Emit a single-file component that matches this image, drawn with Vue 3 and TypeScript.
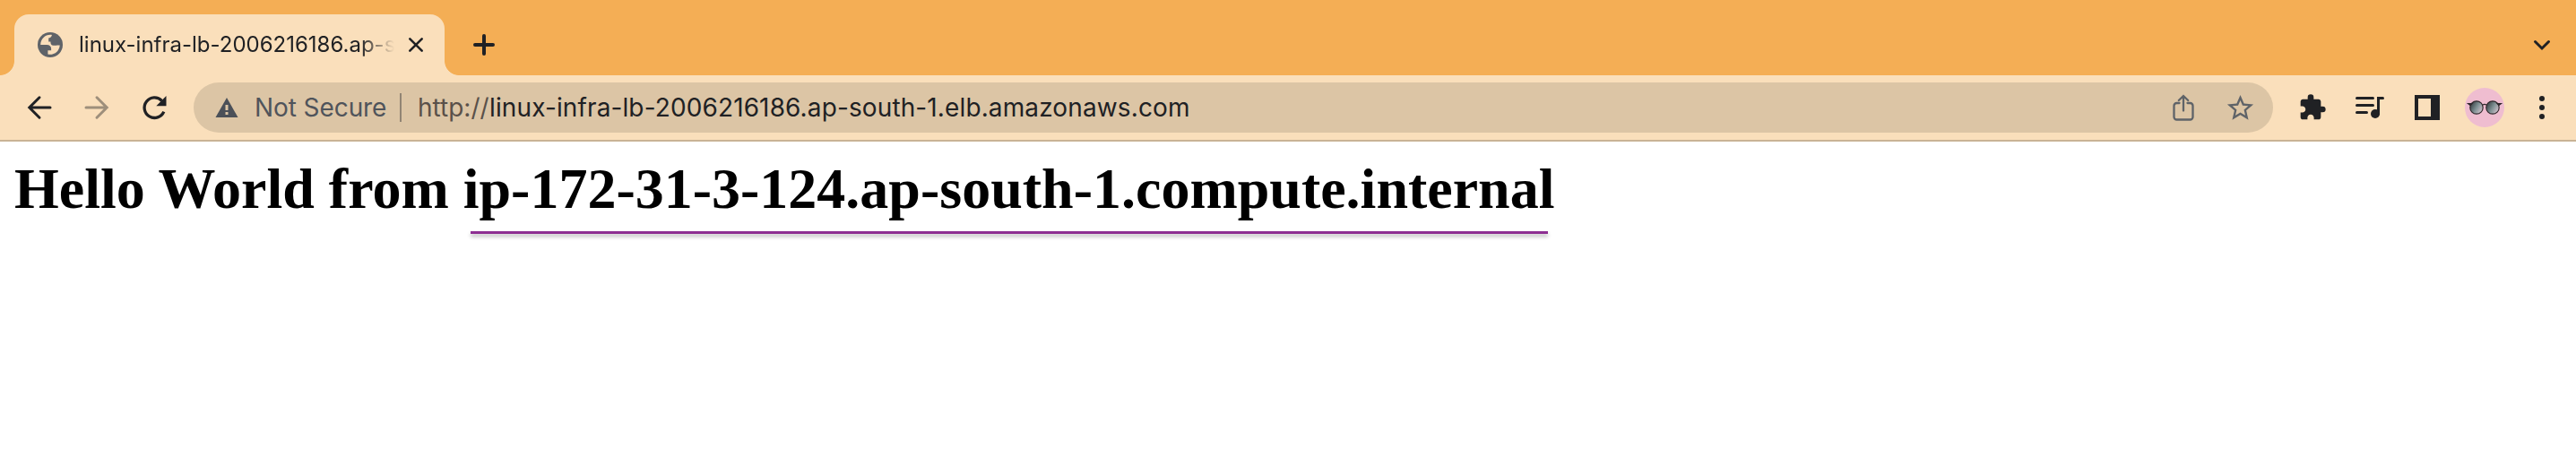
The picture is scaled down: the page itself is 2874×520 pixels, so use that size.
<script setup lang="ts">
const host: string = 'linux-infra-lb-2006216186.ap-south-1.elb.amazonaws.com'
const greeting: string = 'Hello World from'
const server: string = 'ip-172-31-3-124.ap-south-1.compute.internal'
</script>

<template>
  <div class="window">
    <header class="tabstrip">
      <div class="tab">
        <svg class="globe" viewBox="0 0 28 28">
          <circle cx="14" cy="14" r="14" fill="#5f6368" />
          <path d="M16 3C9 2 3.500 7 3.200 14h7.100c2.900 0 4.800 1.600 4.800 4.300v2h-3.700v4.300c7 1.300 12.900-3.600 13.300-10.200h-2.800c-.8 0-1.100.3-1.100.3h-3.100c-2.700 0-3.300-1.600-3.300-4.200h-2.200V6.500c1.500 0 2.900-.8 3.800-3.500z" fill="#fadfbb" />
        </svg>
        <span class="title">{{ host }}</span>
        <svg class="close" viewBox="0 0 16 16"><path d="M1.300 1.300l13.400 13.400M14.700 1.300L1.300 14.700" /></svg>
      </div>
      <svg class="plus" viewBox="0 0 24 24"><path d="M12 2v20M2 12h20" /></svg>
      <svg class="chevron" viewBox="0 0 18 12"><path d="M1.500 1.500L9 9l7.500-7.500" /></svg>
    </header>

    <div class="toolbar">
      <svg class="arrow back" viewBox="0 0 28 28"><path d="M26 14H3M14 2.800L2.800 14 14 25.200" /></svg>
      <svg class="arrow forward" viewBox="0 0 28 28"><path d="M2 14h23M14 2.800L25.200 14 14 25.200" /></svg>
      <svg class="reload" viewBox="0 0 28 28">
        <path d="M22.500 6.300A11.300 11.300 0 1 0 24.800 18.600" fill="none" stroke="#202124" stroke-width="3.300" />
        <path d="M27.500 1v11.200H16.300z" fill="#202124" />
      </svg>
      <div class="omnibox">
        <svg class="warning" viewBox="0 0 26 22">
          <path d="M13 0l12.500 22H.5z" fill="#4b5058" />
          <path d="M11.500 8h3v6h-3zM11.500 16h3v3h-3z" fill="#dcc5a5" />
        </svg>
        <span class="security">Not Secure</span>
        <i class="divider"></i>
        <span class="scheme">http://</span><span class="host">{{ host }}</span>
        <svg class="share" viewBox="0 0 24 30">
          <path d="M7.500 10H4.500a3 3 0 0 0-3 3v12.500a3 3 0 0 0 3 3h15a3 3 0 0 0 3-3V13a3 3 0 0 0-3-3h-3M12 18.500V2.200M6.800 7L12 2l5.200 5" />
        </svg>
        <svg class="star" viewBox="0 0 24 24">
          <path d="M22 9.240l-7.190-.62L12 2 9.190 8.630 2 9.240l5.460 4.730L5.820 21 12 17.270 18.180 21l-1.630-7.030L22 9.240zM12 15.400l-3.760 2.270 1-4.280-3.320-2.880 4.380-.38L12 6.100l1.710 4.040 4.380.38-3.320 2.880 1 4.280L12 15.400z" />
        </svg>
      </div>
      <svg class="puzzle" viewBox="0 0 24 24">
        <path d="M20.500 11H19V7c0-1.100-.9-2-2-2h-4V3.500a2.500 2.500 0 0 0-5 0V5H4c-1.100 0-1.990.9-1.990 2v3.800H3.500c1.490 0 2.700 1.210 2.700 2.700s-1.210 2.700-2.700 2.700H2V20c0 1.100.9 2 2 2h3.800v-1.500c0-1.490 1.210-2.700 2.700-2.700s2.700 1.210 2.700 2.700V22H17c1.100 0 2-.9 2-2v-4h1.500a2.500 2.500 0 0 0 0-5z" />
      </svg>
      <svg class="music" viewBox="0 0 32 26">
        <path d="M1.500 2.500h18M1.500 10.500h18M1.500 18.500h11M30.500 2.500h-5V20" fill="none" stroke="#202124" stroke-width="3" stroke-linecap="round" />
        <circle cx="22" cy="20" r="5" fill="#202124" />
      </svg>
      <svg class="panel" viewBox="0 0 28 28"><path fill-rule="evenodd" d="M0 0h28v28H0zM4 4v20h14V4z" /></svg>
      <svg class="avatar" viewBox="0 0 44 44">
        <defs>
          <linearGradient id="lens" x1="0" y1="0.200" x2="1" y2="0.800">
            <stop offset="0" stop-color="#343b3e" />
            <stop offset="0.500" stop-color="#7e9093" />
            <stop offset="1" stop-color="#dcc9d4" />
          </linearGradient>
        </defs>
        <circle cx="22" cy="22" r="22" fill="#efbdd0" />
        <g stroke="#30292d" stroke-width="1.200">
          <circle cx="13" cy="22" r="7.200" fill="url(#lens)" />
          <circle cx="31" cy="22" r="7.200" fill="url(#lens)" />
          <path d="M20 19q2-1.300 4 0" fill="none" />
          <path d="M3.500 17.500h4.500l-2 2zM40.500 17.500H36l2 2z" fill="#30292d" />
        </g>
      </svg>
      <svg class="dots" viewBox="0 0 6 26"><circle cx="3" cy="3" r="3" /><circle cx="3" cy="13" r="3" /><circle cx="3" cy="23" r="3" /></svg>
    </div>

    <main class="page">
      <h1>{{ greeting }} <span class="server">{{ server }}</span></h1>
    </main>
  </div>
</template>

<style>
body { margin: 0; background: #fff; }
</style>

<style scoped>
.window { width: 2874px; height: 520px; overflow: hidden; background: #fff; font-family: Inter, "Liberation Sans", sans-serif; color: #202124; }
svg { display: block; flex: none; overflow: visible; }
.tabstrip { display: flex; box-sizing: border-box; height: 84px; padding: 16px 29px 0 16px; background: #f4ae55; }
.tab { position: relative; display: flex; box-sizing: border-box; width: 480px; height: 68px; padding: 20px 24px 0 26px; border-radius: 16px 16px 0 0; background: #fadfbb; }
.tab::before, .tab::after { content: ""; position: absolute; bottom: 0; width: 16px; height: 16px; }
.tab::before { left: -16px; background: radial-gradient(circle at 0 0, transparent 15.500px, #fadfbb 16.300px); }
.tab::after { right: -16px; background: radial-gradient(circle at 100% 0, transparent 15.500px, #fadfbb 16.300px); }
.globe { width: 28px; height: 28px; }
.title { width: 354px; margin-left: 18px; overflow: hidden; white-space: nowrap; font-size: 24px; line-height: 28px; -webkit-mask-image: linear-gradient(90deg, #000 314px, transparent 352px); mask-image: linear-gradient(90deg, #000 314px, transparent 352px); }
.close { width: 16px; height: 16px; margin: 6px 0 0 14px; }
.close path, .plus path, .chevron path, .arrow path { fill: none; stroke: #202124; stroke-linecap: round; }
.close path { stroke-width: 2.600; }
.plus { width: 24px; height: 24px; margin: 22px 0 0 32px; }
.plus path { stroke-width: 4; }
.chevron { width: 18px; height: 12px; margin: 29px 0 0 auto; }
.chevron path { stroke-width: 3; }
.toolbar { display: flex; align-items: center; box-sizing: border-box; height: 74px; padding: 0 35px 0 30px; border-bottom: 2px solid #c9b395; background: #fadfbb; }
.arrow { width: 28px; height: 28px; }
.arrow path { stroke-width: 3; }
.forward { margin-left: 36px; opacity: 0.420; }
.reload { width: 28px; height: 28px; margin-left: 36px; }
.omnibox { display: flex; align-items: center; box-sizing: border-box; width: 2320px; height: 56px; margin-left: 30px; padding: 0 19px 0 24px; border-radius: 28px; background: #dcc5a5; font-size: 28px; line-height: 34px; white-space: nowrap; }
.warning { width: 26px; height: 22px; }
.security { width: 147px; margin-left: 18px; color: #50545b; letter-spacing: -0.080px; }
.divider { width: 2px; height: 32px; margin-left: 15px; background: #918474; }
.scheme { width: 80px; margin-left: 18px; color: #5a514a; }
.host { letter-spacing: 0.120px; }
.share { width: 24px; height: 30px; margin-left: auto; }
.share path { fill: none; stroke: #5f6368; stroke-width: 2.300; stroke-linecap: round; }
.star { width: 35px; height: 35px; margin-left: 34px; }
.star path { fill: #5f6368; }
.puzzle { width: 32px; height: 32px; margin-left: 28px; }
.puzzle path, .panel path, .dots circle { fill: #202124; }
.music { width: 32px; height: 26px; margin-left: 32px; }
.panel { width: 28px; height: 28px; margin-left: 34px; }
.avatar { width: 44px; height: 44px; margin-left: 28px; }
.dots { width: 6px; height: 26px; margin-left: auto; }
.page { padding: 16px; }
h1 { margin: 0; color: #000; font: bold 64px/74px "Liberation Serif", serif; white-space: nowrap; }
.server { position: relative; }
.server::after { content: ""; position: absolute; left: 8px; right: 7px; bottom: -15px; height: 3px; background: #8d2f92; box-shadow: 0 3px 4px rgba(0, 0, 0, 0.300); }
</style>
